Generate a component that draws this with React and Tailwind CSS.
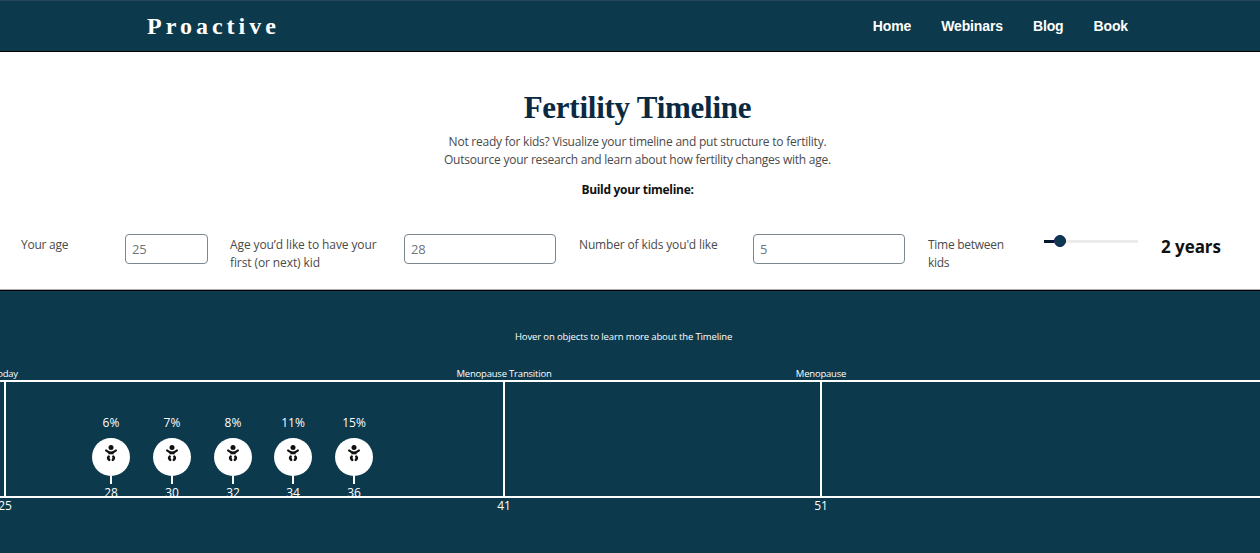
const links = ["Home", "Webinars", "Blog", "Book"];

const kids = [
  { age: 28, chance: "6%", x: 111 },
  { age: 30, chance: "7%", x: 172 },
  { age: 32, chance: "8%", x: 233 },
  { age: 34, chance: "11%", x: 293 },
  { age: 36, chance: "15%", x: 354 },
];

const milestones = [
  { age: 25, label: "Today", x: 5 },
  { age: 41, label: "Menopause Transition", x: 504 },
  { age: 51, label: "Menopause", x: 821 },
];

function BabyIcon() {
  return (
    <svg viewBox="0 0 14 18" className="h-[18px] w-[14px]" fill="none" stroke="currentColor" strokeLinecap="round">
      <circle cx="7" cy="3.4" r="2.5" fill="currentColor" stroke="none" />
      <path d="M2.1 6.5Q4.3 8.6 7 8.6Q9.7 8.6 11.9 6.5" strokeWidth="2.2" />
      <path d="M4.4 8.2h5.2v2.1H4.4z" fill="currentColor" stroke="none" />
      <path d="M4.7 12.7C3.7 13.7 3.8 14.5 5.2 15.9M9.3 12.7C10.3 13.7 10.2 14.5 8.8 15.9" strokeWidth="2.5" />
    </svg>
  );
}

function Header() {
  return (
    <header className="flex h-[52px] items-center justify-between border-t border-b border-t-[#29475a] border-b-black bg-[#0c394b] pr-[132px] pl-[147px] text-white">
      <div className="font-['Liberation_Serif',serif] text-[24px] leading-none font-bold tracking-[4px]">Proactive</div>
      <nav className="flex gap-[30px] font-['Liberation_Sans',sans-serif] text-[14px] font-bold tracking-[-0.13px]">
        {links.map((l) => (
          <a key={l}>{l}</a>
        ))}
      </nav>
    </header>
  );
}

function NumberField({ value, className }) {
  return (
    <div className={`-mt-[2px] h-[30px] shrink-0 rounded-[4px] border border-[#7b878e] pl-[6px] text-[13px] leading-[28px] tracking-[-0.3px] text-[#6c757d] ${className}`}>
      {value}
    </div>
  );
}

function Controls() {
  return (
    <form className="mt-[36px] flex items-start pl-[21px] text-[12px] leading-[18px] tracking-[-0.15px] text-[#4a4a4a]">
      <label className="w-[104px] shrink-0 tracking-[-0.25px]">Your age</label>
      <NumberField value="25" className="w-[83px]" />
      <label className="ml-[22px] w-[174px] shrink-0 tracking-[-0.1px]">
        Age you’d like to have your
        <br />
        first (or next) kid
      </label>
      <NumberField value="28" className="w-[152px]" />
      <label className="ml-[23px] w-[174px] shrink-0">Number of kids you'd like</label>
      <NumberField value="5" className="w-[152px]" />
      <label className="ml-[23px] w-[116px] shrink-0 tracking-[-0.28px]">
        Time between
        <br />
        kids
      </label>
      <div className="-mt-px flex h-[12px] w-[94px] shrink-0 items-center">
        <div className="h-[3px] w-[10px] bg-[#03172f]" />
        <div className="size-[12px] rounded-full border border-[#0a1a62] bg-[#0c394b]" />
        <div className="h-[3px] flex-1 bg-[#ececec]" />
      </div>
      <div className="-mt-px ml-[23px] text-[17px] leading-[24px] font-bold tracking-[-0.05px] whitespace-nowrap text-[#111]">2 years</div>
    </form>
  );
}

function Timeline() {
  return (
    <section className="h-[263px] overflow-hidden border-t border-black bg-[#0c394b] text-white">
      <p className="mt-[38px] pl-[515px] text-[9.5px] leading-[15px] tracking-[-0.13px]">Hover on objects to learn more about the Timeline</p>
      <div className="relative mt-[36px] h-[118px] border-y-2 border-white">
        {milestones.map((m) => (
          <div key={m.age} className="absolute -top-[17px] flex w-[140px] -translate-x-1/2 flex-col items-center" style={{ left: m.x }}>
            <span className="h-[17px] text-[9.5px] leading-[17px] tracking-[-0.2px]">{m.label}</span>
            <span className="h-[114px] w-[2px] bg-white" />
            <span className="mt-[2px] text-[12px] leading-[16px]">{m.age}</span>
          </div>
        ))}
        <div className="absolute inset-0 overflow-hidden">
          {kids.map((k) => (
            <div key={k.age} className="absolute top-[33px] flex w-[40px] -translate-x-1/2 flex-col items-center text-[12px] leading-[16px]" style={{ left: k.x }}>
              <span>{k.chance}</span>
              <span className="mt-[7px] flex size-[38px] shrink-0 justify-center rounded-full bg-white pt-[6px] text-[#111]">
                <BabyIcon />
              </span>
              <span className="h-[8px] w-[2px] shrink-0 bg-white" />
              <span className="mt-px">{k.age}</span>
            </div>
          ))}
        </div>
      </div>
    </section>
  );
}

export default function App() {
  return (
    <div className="h-[553px] w-[1260px] overflow-hidden bg-white font-['Open_Sans',sans-serif]">
      <Header />
      <main>
        <section className="h-[238px] border-b border-[#aaa]">
          <div className="flex flex-col items-center pt-[37px] pl-[15px] text-center">
            <h1 className="font-['Liberation_Serif',serif] text-[31px] leading-[38px] font-bold tracking-[-0.25px] text-[#0b2a42]">Fertility Timeline</h1>
            <p className="mt-[6px] text-[12px] leading-[18px] tracking-[-0.23px] text-[#4a4a4a]">
              Not ready for kids? Visualize your timeline and put structure to fertility.
              <br />
              Outsource your research and learn about how fertility changes with age.
            </p>
            <p className="mt-[12px] mb-px text-[12px] leading-[18px] font-bold tracking-[-0.3px] text-[#111]">Build your timeline:</p>
          </div>
          <Controls />
        </section>
        <Timeline />
      </main>
    </div>
  );
}
